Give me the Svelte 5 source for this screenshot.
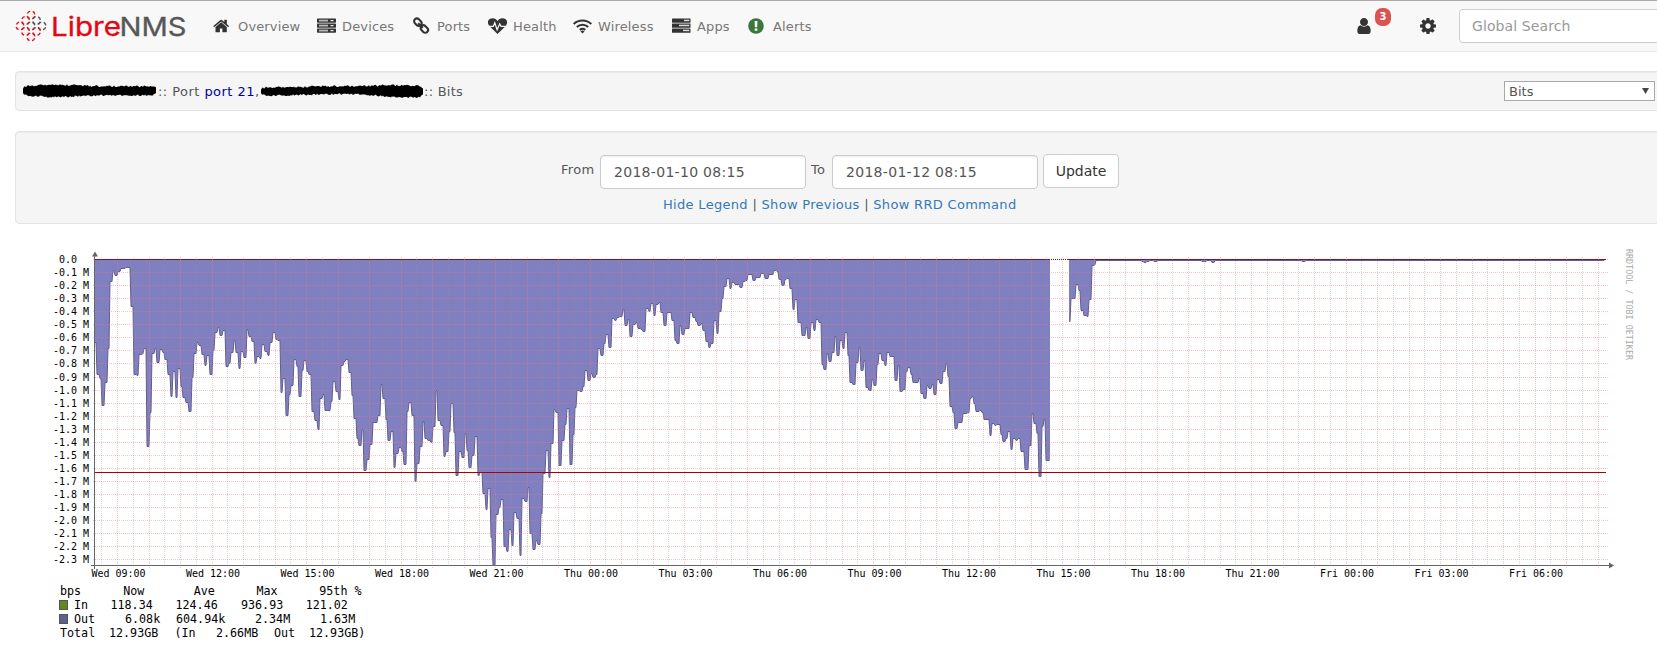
<script>
    const nav = ["Overview", "Devices", "Ports", "Health", "Wireless", "Apps", "Alerts"];

    let from = "2018-01-10 08:15";
    let to = "2018-01-12 08:15";

    // outbound traffic, "end,depth" per sample in thirds of a pixel
    const runs = [
        { start: 164, shift: 0, steps: "170,307 179,403 186,415 194,496 203,427 210,325 219,124 226,91 234,106 242,94 258,85 273,82 281,199 290,404 297,406 308,343 313,340 320,325 329,619 336,517 345,340 350,325 360,367 369,328 375,337 383,358 392,403 399,469 407,394 414,472 423,385 430,439 437,472 446,487 456,514 462,411 471,340 478,307 486,316 494,343 501,376 510,346 519,403 524,331 534,277 540,262 549,286 557,271 566,379 573,371 582,337 588,301 596,337 603,385 611,334 621,352 628,268 636,289 645,304 652,370 660,349 667,355 675,313 684,334 690,346 700,307 707,277 714,298 722,301 730,457 738,415 747,526 753,463 762,436 771,358 777,379 786,469 793,391 800,361 808,394 816,403 825,514 833,541 841,568 849,475 855,463 872,511 880,484 888,424 896,454 903,478 912,376 919,364 927,358 936,397 942,466 950,535 958,595 966,616 973,568 981,691 989,658 998,613 1013,547 1022,526 1028,433 1037,475 1044,538 1052,601 1061,574 1068,682 1077,640 1085,622 1092,634 1101,673 1107,514 1115,487 1124,526 1131,724 1140,670 1148,619 1155,544 1164,595 1172,601 1180,607 1188,559" },
        { shift: 900, steps: "295,451 303,541 311,556 319,649 327,634 334,574 341,490 349,577 358,706 366,634 375,652 381,580 388,631 397,682 405,646 413,589 420,706 430,698 438,760 445,808 453,745 459,892 468,976 477,823 484,802 492,778 500,919 507,934 515,868 522,916 531,817 540,835 547,946 555,775 565,784 570,742 579,880 587,928 595,901 603,913 609,820 618,700 626,631 634,712 642,610 649,508 657,517 666,676 674,601 682,553 689,505 698,673 705,583 711,502 721,451 729,454 736,439 744,391 753,421 760,400 768,412 775,403 784,325 792,346 799,310 807,283 815,322 824,235 832,241 840,232 848,229 855,208 863,256 870,238 880,289 887,253 894,247 903,265 910,268 918,274 926,205 933,214 942,190 949,226 957,193 963,187 972,217 981,256 996,217 1004,241 1012,301 1021,310 1027,256 1036,283 1050,265 1059,217 1067,232 1075,244 1082,256 1089,250 1098,271 1107,304 1114,322 1122,310 1130,241 1137,280 1145,214 1153,175 1161,139 1169,115 1177,145 1185,127 1200,133" },
        { shift: 1800, steps: "309,142 317,124 325,121 338,104 348,121 364,112 376,100 388,115 403,103 411,91 418,94 426,118 435,136 442,118 450,115 458,145 466,208 474,178 487,247 497,286 504,262 513,295 522,247 529,271 538,238 545,247 552,373 561,388 568,340 576,364 585,337 592,289 600,346 609,301 616,325 624,277 630,346 639,427 649,433 656,367 663,322 672,391 678,361 687,442 695,451 702,418 711,436 718,373 726,340 734,361 742,376 749,337 765,349 774,421 780,376 790,454 798,448 804,394 812,382 820,403 838,427 844,415 852,460 861,475 867,436 876,445 882,433 892,463 899,418 908,430 917,394 923,371 930,409 938,499 945,517 955,565 969,547 984,520 990,517 995,475 1001,469 1008,490 1020,514 1026,511 1033,517 1050,538 1057,586 1066,550 1072,556 1082,553 1089,583 1097,604 1105,595 1112,574 1120,628 1127,595 1134,601 1144,595 1155,634 1167,688 1176,616" },
        { shift: 2580, steps: "402,520 410,550 416,580 426,709 433,559 439,538 451,661" },
        { start: 507, shift: 2580, steps: "514,244 529,175 537,133 543,151 552,211 560,226 568,229 577,178 584,76 588,73 726,61 732,64 741,67 750,64 763,61 775,64 905,61 921,64 936,61 946,67 1206,61 1217,64 2115,61" },
    ];

    const px = (v, shift = 0) => 40 + Math.round((v + shift) / 3);

    let shapes = [];
    for (const run of runs) {
        if (run.start) {
            shapes.push({ first: px(run.start, run.shift), points: [] });
        }
        const { points } = shapes[shapes.length - 1];
        for (const step of run.steps.split(" ")) {
            const [end, depth] = step.split(",").map(Number);
            points.push([px(end, run.shift), 240 + Math.floor(depth / 3) + 0.5]);
        }
    }

    function outline({ first, points }) {
        let x = first;
        let d = "";
        for (const [end, y] of points) {
            d += `${d ? "L" : "M"}${x} ${y}H${end - 1}`;
            x = end;
        }
        return d;
    }

    function area(shape) {
        const last = shape.points[shape.points.length - 1];
        return `${outline(shape)}H${last[0]}V259H${shape.first}Z`;
    }

    const rows = Array.from({ length: 24 }, (_, n) => ({
        y: Math.floor(259.65 + 13.043 * n) + 0.5,
        label: n === 0 ? "0.0\u00a0\u00a0" : `-${(n / 10).toFixed(1)} M`,
    }));

    const columns = Array.from({ length: 96 }, (_, n) => ({
        x: Math.floor(117.7 + 15.75 * (n - 1)) + 0.5,
        major: n % 2 === 1,
    }));

    const times = ["Wed 09:00", "Wed 12:00", "Wed 15:00", "Wed 18:00", "Wed 21:00", "Thu 00:00", "Thu 03:00", "Thu 06:00", "Thu 09:00", "Thu 12:00", "Thu 15:00", "Thu 18:00", "Thu 21:00", "Fri 00:00", "Fri 03:00", "Fri 06:00"];

    const legend = [
        [595, [60, "bps"], [123.3, "Now"], [193.7, "Ave"], [256.5, "Max"], [319.3, "95th %"]],
        [609, [74, "In"], [110.5, "118.34"], [175.5, "124.46"], [241, "936.93"], [305.7, "121.02"]],
        [623, [74, "Out"], [125, "6.08k"], [176, "604.94k"], [255, "2.34M"], [320, "1.63M"]],
        [637, [60, "Total"], [109, "12.93GB"], [174.5, "(In"], [216, "2.66MB"], [274, "Out"], [309, "12.93GB)"]],
    ];

    // rough marker strokes over the host and port names
    function scribble(width, mid, half) {
        const top = [];
        const bottom = [];
        for (let x = 0; x <= width; x += 1) {
            const edge = Math.min(1, 0.5 + Math.min(x, width - x) / 8);
            const noise = (Math.abs(Math.sin(x * 12.9898)) * 437.7) % 1;
            const other = (Math.abs(Math.sin(x * 7.233)) * 913.3) % 1;
            top.push(`${x},${mid(x) - half(x) * edge - noise * 1.8}`);
            bottom.unshift(`${x},${mid(x) + half(x) * edge + other * 1.8}`);
        }
        return top.concat(bottom).join(" ");
    }

    const hostMark = scribble(133, () => 8.8, (x) => 3.6 + 1.5 * Math.exp(-(((x - 35) / 28) ** 2)));
    const portMark = scribble(162, (x) => 8.8 - Math.sin(x / 26 - 1.6) * 0.7, (x) => 3.1 + 1.9 / (1 + Math.exp((115 - x) / 6)));

    const rings = [
        [31, 15, 0], [25.5, 20.5, 0], [36.5, 20.5, 1],
        [20, 26, 0], [31, 26, 1], [42, 26, 1],
        [25.5, 31.5, 0], [36.5, 31.5, 0], [31, 37, 0],
    ];
</script>

<style>
    :global(body) {
        margin: 0;
        overflow: hidden;
        background: #fff;
    }

    .page {
        width: 1657px;
        height: 647px;
        overflow: hidden;
        color: #555;
        font-family: "DejaVu Sans", Verdana, sans-serif;
        font-size: 13px;
    }

    .navbar {
        box-sizing: border-box;
        height: 52px;
        display: flex;
        align-items: center;
        background: #f8f8f8;
        border-top: 1px solid #aaa;
        border-bottom: 1px solid #e7e7e7;
    }

    .logo {
        flex: none;
        width: 213px;
        height: 50px;
    }

    .menu {
        display: grid;
        flex: none;
        grid-template-columns: 104px 95px 76px 85px 99px 76px 609px;
        color: #777;
    }

    .item {
        display: flex;
        align-items: center;
        height: 50px;
        letter-spacing: 0.15px;
    }

    .item svg {
        flex: none;
        width: 20px;
        height: 18px;
        margin-right: 5px;
        fill: #333;
    }

    .user {
        display: flex;
        flex: none;
        width: 63px;
        height: 50px;
        align-items: center;
    }

    .user svg,
    .gear {
        flex: none;
        fill: #333;
    }

    .badge {
        width: 16px;
        height: 18px;
        margin: 0 0 18px 4px;
        border-radius: 7px;
        background: #d9534f;
        color: #fff;
        font-size: 10px;
        font-weight: bold;
        line-height: 17px;
        text-align: center;
    }

    .search {
        box-sizing: border-box;
        flex: none;
        width: 230px;
        height: 34px;
        margin-left: 23px;
        padding: 0 12px;
        border: 1px solid #ccc;
        border-radius: 4px;
        font: 14px "DejaVu Sans", sans-serif;
        letter-spacing: 0.1px;
    }

    .search::placeholder {
        color: #999;
    }

    .well {
        box-sizing: border-box;
        width: 1680px;
        margin-left: 15px;
        background: #f5f5f5;
        border: 1px solid #e3e3e3;
        border-radius: 4px;
        box-shadow: inset 0 1px 1px rgba(0, 0, 0, 0.05);
    }

    .title {
        display: flex;
        align-items: center;
        height: 40px;
        margin-top: 19px;
        padding-left: 7px;
    }

    .title > span {
        width: 103px;
        white-space: pre;
        letter-spacing: 0.45px;
    }

    .title .graph-type {
        width: auto;
        letter-spacing: 0.25px;
    }

    .title .name {
        color: #00009c;
    }

    .type {
        box-sizing: border-box;
        display: flex;
        justify-content: space-between;
        align-items: center;
        width: 151px;
        height: 20px;
        margin-left: auto;
        margin-right: 39px;
        padding: 0 5px 0 4px;
        border: 1px solid #a9a9a9;
        background: #fff;
    }

    .range {
        height: 93px;
        margin-top: 20px;
        padding: 22px 0 0 545px;
    }

    .range form {
        display: flex;
        align-items: center;
        height: 34px;
    }

    .range label {
        width: 39px;
        margin-bottom: 4px;
        letter-spacing: 0.3px;
    }

    .range label.short {
        width: 21px;
        margin-left: 5px;
    }

    .range input {
        box-sizing: border-box;
        width: 206px;
        height: 34px;
        margin-top: 2px;
        padding: 0 13px;
        border: 1px solid #ccc;
        border-radius: 4px;
        box-shadow: inset 0 1px 1px rgba(0, 0, 0, 0.075);
        color: #555;
        font: 14px "DejaVu Sans", sans-serif;
        letter-spacing: 0.3px;
    }

    .range button {
        box-sizing: border-box;
        width: 76px;
        height: 34px;
        margin-left: 5px;
        padding: 0;
        border: 1px solid #ccc;
        border-radius: 4px;
        background: #fff;
        color: #333;
        font: 14px "DejaVu Sans", sans-serif;
    }

    .links {
        margin: 9px 0 0 102px;
        letter-spacing: 0.31px;
        white-space: nowrap;
    }

    .links a {
        color: #337ab7;
        text-decoration: none;
    }

    .graph {
        display: block;
        margin-top: 6px;
        font-family: "DejaVu Sans Mono", monospace;
        font-size: 10px;
    }

    .grid {
        stroke-width: 1;
        stroke-dasharray: 1 1;
        shape-rendering: crispEdges;
    }

    .minor {
        stroke: rgba(143, 143, 143, 0.35);
    }

    .major {
        stroke: rgba(245, 120, 130, 0.45);
    }
</style>

<div class="page">
    <div class="navbar">
        <svg class="logo" viewBox="0 1 213 50">
            {#each rings as [x, y, grey]}
                <circle
                    cx={x}
                    cy={y}
                    r="3.9"
                    fill="none"
                    stroke={grey ? "#555" : "#e2141e"}
                    stroke-width="1.4"
                    stroke-dasharray="3.5 2.63"
                    stroke-dashoffset="-1.3" />
            {/each}
            <g font-family="Inter, sans-serif" font-size="26">
                <text x="51" y="36" fill="#e30613" stroke="#e30613" stroke-width=".3" textLength="70" lengthAdjust="spacingAndGlyphs">Libre</text>
                <text x="119.5" y="36" fill="#575757" stroke="#575757" stroke-width=".3" textLength="67" lengthAdjust="spacingAndGlyphs">NMS</text>
            </g>
        </svg>

        <div class="menu">
            {#each nav as name}
                <div class="item">
                    <svg viewBox="0 0 20 18">
                        {#if name === "Overview"}
                            <path transform="translate(0 .3) scale(.0098)" d="M1408 992v480q0 26-19 45t-45 19h-384v-384h-256v384h-384q-26 0-45-19t-19-45v-480q0-1 .5-3t.5-3l575-474 575 474q1 2 1 6zm223-69l-62 74q-8 9-21 11h-3q-13 0-21-7l-692-577-692 577q-12 8-24 7-13-2-21-11l-62-74q-8-10-7-23.5t11-21.5l719-599q32-26 76-26t76 26l244 204v-195q0-14 9-23t23-9h192q14 0 23 9t9 23v408l219 182q10 8 11 21.5t-7 23.5z" />
                        {:else if name === "Devices"}
                            {#each [1.5, 6.5, 11.5] as y}
                                <rect x="0" {y} width="19" height="4.2" rx=".7" />
                                <path d="M2 {y + 1.2}h9v1.8h-9z" fill="#bbb" />
                                <path d="M13.5 {y + 1.5}h3v1.2h-3z" fill="#eee" />
                            {/each}
                        {:else if name === "Ports"}
                            <g fill="none" stroke="#333" stroke-width="2.1">
                                <rect x="-1" y="-3" width="8.2" height="5.6" rx="2.8" transform="translate(3.5 3.2) rotate(45)" />
                                <rect x="-1" y="-3" width="8.2" height="5.6" rx="2.8" transform="translate(10 10) rotate(45)" />
                                <path d="M6.2 6.2l4.5 4.7" />
                            </g>
                        {:else if name === "Health"}
                            <path d="M9.5 17L1.3 9C-2 4.4 1 1.2 4.6 1.2c2.4 0 3.9 1.4 4.9 2.8 1-1.4 2.5-2.8 4.9-2.8C18 1.2 21 4.4 17.7 9z" />
                            <path d="M0 9.3h5.3l1.5-3.5 2.3 7 2.6-6 1.3 2.5H19" fill="none" stroke="#f8f8f8" stroke-width="1.2" />
                        {:else if name === "Wireless"}
                            <g fill="none" stroke="#333" stroke-width="2.1">
                                <path d="M.7 7a12.8 12.8 0 0 1 17.6 0M3.8 10a8.4 8.4 0 0 1 11.4 0M6.8 12.9a4.2 4.2 0 0 1 5.4 0" />
                            </g>
                            <path d="M9.5 16.5L7.5 14.4q2-1.6 4 0z" />
                        {:else if name === "Apps"}
                            {#each [[1.5, 12], [6.5, 7], [11.5, 11]] as [y, x]}
                                <rect x="0" {y} width="18.5" height="4.2" rx=".5" />
                                <path d="M{x} {y + 1.2}H17.3v1.5H{x}z" fill="#ddd" />
                            {/each}
                        {:else}
                            <circle cx="8" cy="9" r="7.8" fill="#3c763d" />
                            <path d="M6.6 4h2.9l-.3 6.2H6.9zM6.7 11.4h2.7v2.4H6.7z" fill="#f8f8f8" />
                        {/if}
                    </svg>
                    <span>{name}</span>
                </div>
            {/each}
        </div>

        <div class="user">
            <svg width="14" height="16" viewBox="256 128 1280 1536">
                <path d="M1536 1399q0 109-62.5 187t-150.5 78h-854q-88 0-150.5-78t-62.5-187q0-85 8.5-160.5t31.5-152 58.5-131 94-89 134.5-34.5q131 128 313 128t313-128q76 0 134.5 34.5t94 89 58.5 131 31.5 152 8.5 160.5zm-256-887q0 159-112.5 271.5t-271.5 112.5-271.5-112.5-112.5-271.5 112.5-271.5 271.5-112.5 271.5 112.5 112.5 271.5z" />
            </svg>
            <span class="badge">3</span>
        </div>
        <svg class="gear" width="16" height="16" viewBox="128 128 1536 1536">
            <path d="M1152 896q0-106-75-181t-181-75-181 75-75 181 75 181 181 75 181-75 75-181zm512-109v222q0 12-8 23t-20 13l-185 28q-19 54-39 91 35 50 107 138 10 12 10 25t-9 23q-27 37-99 108t-94 71q-12 0-26-9l-138-108q-44 23-91 38-16 136-29 186-7 28-36 28h-222q-14 0-24.5-8.5t-11.5-21.5l-28-184q-49-16-90-37l-141 107q-10 9-25 9-14 0-25-11-126-114-165-168-7-10-7-23 0-12 8-23 15-21 51-66.5t54-70.5q-27-50-41-99l-183-27q-13-2-21-12.5t-8-23.5v-222q0-12 8-23t19-13l186-28q14-46 39-92-40-57-107-138-10-12-10-24 0-10 9-23 26-36 98.5-107.5t94.5-71.5q13 0 26 10l138 107q44-23 91-38 16-136 29-186 7-28 36-28h222q14 0 24.5 8.5t11.5 21.5l28 184q49 16 90 37l142-107q9-9 24-9 13 0 25 10 129 119 165 170 7 8 7 22 0 12-8 23-15 21-51 66.5t-54 70.5q26 50 41 98l183 28q13 2 21 12.5t8 23.5z" />
        </svg>
        <input class="search" placeholder="Global Search" />
    </div>

    <div class="well title">
        <svg width="135" height="18"><polygon points={hostMark} /></svg>
        <span>:: Port <span class="name">port 21</span>,</span>
        <svg width="163" height="18"><polygon points={portMark} /></svg>
        <span class="graph-type">:: Bits</span>
        <div class="type">
            <span>Bits</span>
            <svg width="7" height="6"><path d="M0 0h7L3.5 6z" fill="#444" /></svg>
        </div>
    </div>

    <div class="well range">
        <form on:submit|preventDefault>
            <label for="from">From</label>
            <input id="from" bind:value={from} />
            <label for="to" class="short">To</label>
            <input id="to" bind:value={to} />
            <button type="submit">Update</button>
        </form>
        <div class="links">
            <a href="#legend">Hide Legend</a> | <a href="#previous">Show Previous</a> | <a href="#command">Show RRD Command</a>
        </div>
    </div>

    <svg class="graph" width="1657" height="417" viewBox="0 230 1657 417">
        {#each shapes as shape}
            <path d={area(shape)} fill="#8080c0" />
            <path d={outline(shape)} fill="none" stroke="#606090" />
        {/each}

        <path d="M95 259.5H1050M1068 259.5H1606" stroke="#602048" />
        {#each columns as { x, major }}
            <line class="grid {major ? 'major' : 'minor'}" x1={x} x2={x} y1="257" y2={major ? 568 : 567} />
        {/each}
        {#each rows as { y, label }}
            <line class="grid major" x1="93" x2="1609" y1={y} y2={y} />
            <text x="89" y={y + 3.5} text-anchor="end">{label}</text>
        {/each}
        <path class="grid" d="M95 259.5H1606" stroke="#c00000" />
        <path d="M95 472.5H1606" stroke="#aa0000" shape-rendering="crispEdges" />

        <path d="M91 565.5H1609M94.5 256V569" stroke="#666" />
        <path d="M92 256.5h6l-3-5zM1609 562.5v6l5-3z" fill="#666" />
        {#each times as time, i}
            <text x={118.5 + 94.5 * i} y="577" text-anchor="middle">{time}</text>
        {/each}
        <text
            transform="translate(1626 249) rotate(90)"
            font-size="8"
            fill="#aaa"
            textLength="111"
            lengthAdjust="spacingAndGlyphs">RRDTOOL / TOBI OETIKER</text>

        <g font-size="11.7">
            {#each legend as [y, ...cells]}
                {#each cells as [x, text]}
                    <text {x} {y}>{text}</text>
                {/each}
            {/each}
        </g>
        <rect x="59.5" y="600.5" width="8" height="9" fill="#608720" stroke="#555" />
        <rect x="59.5" y="614.5" width="8" height="9" fill="#606090" stroke="#555" />
    </svg>
</div>
